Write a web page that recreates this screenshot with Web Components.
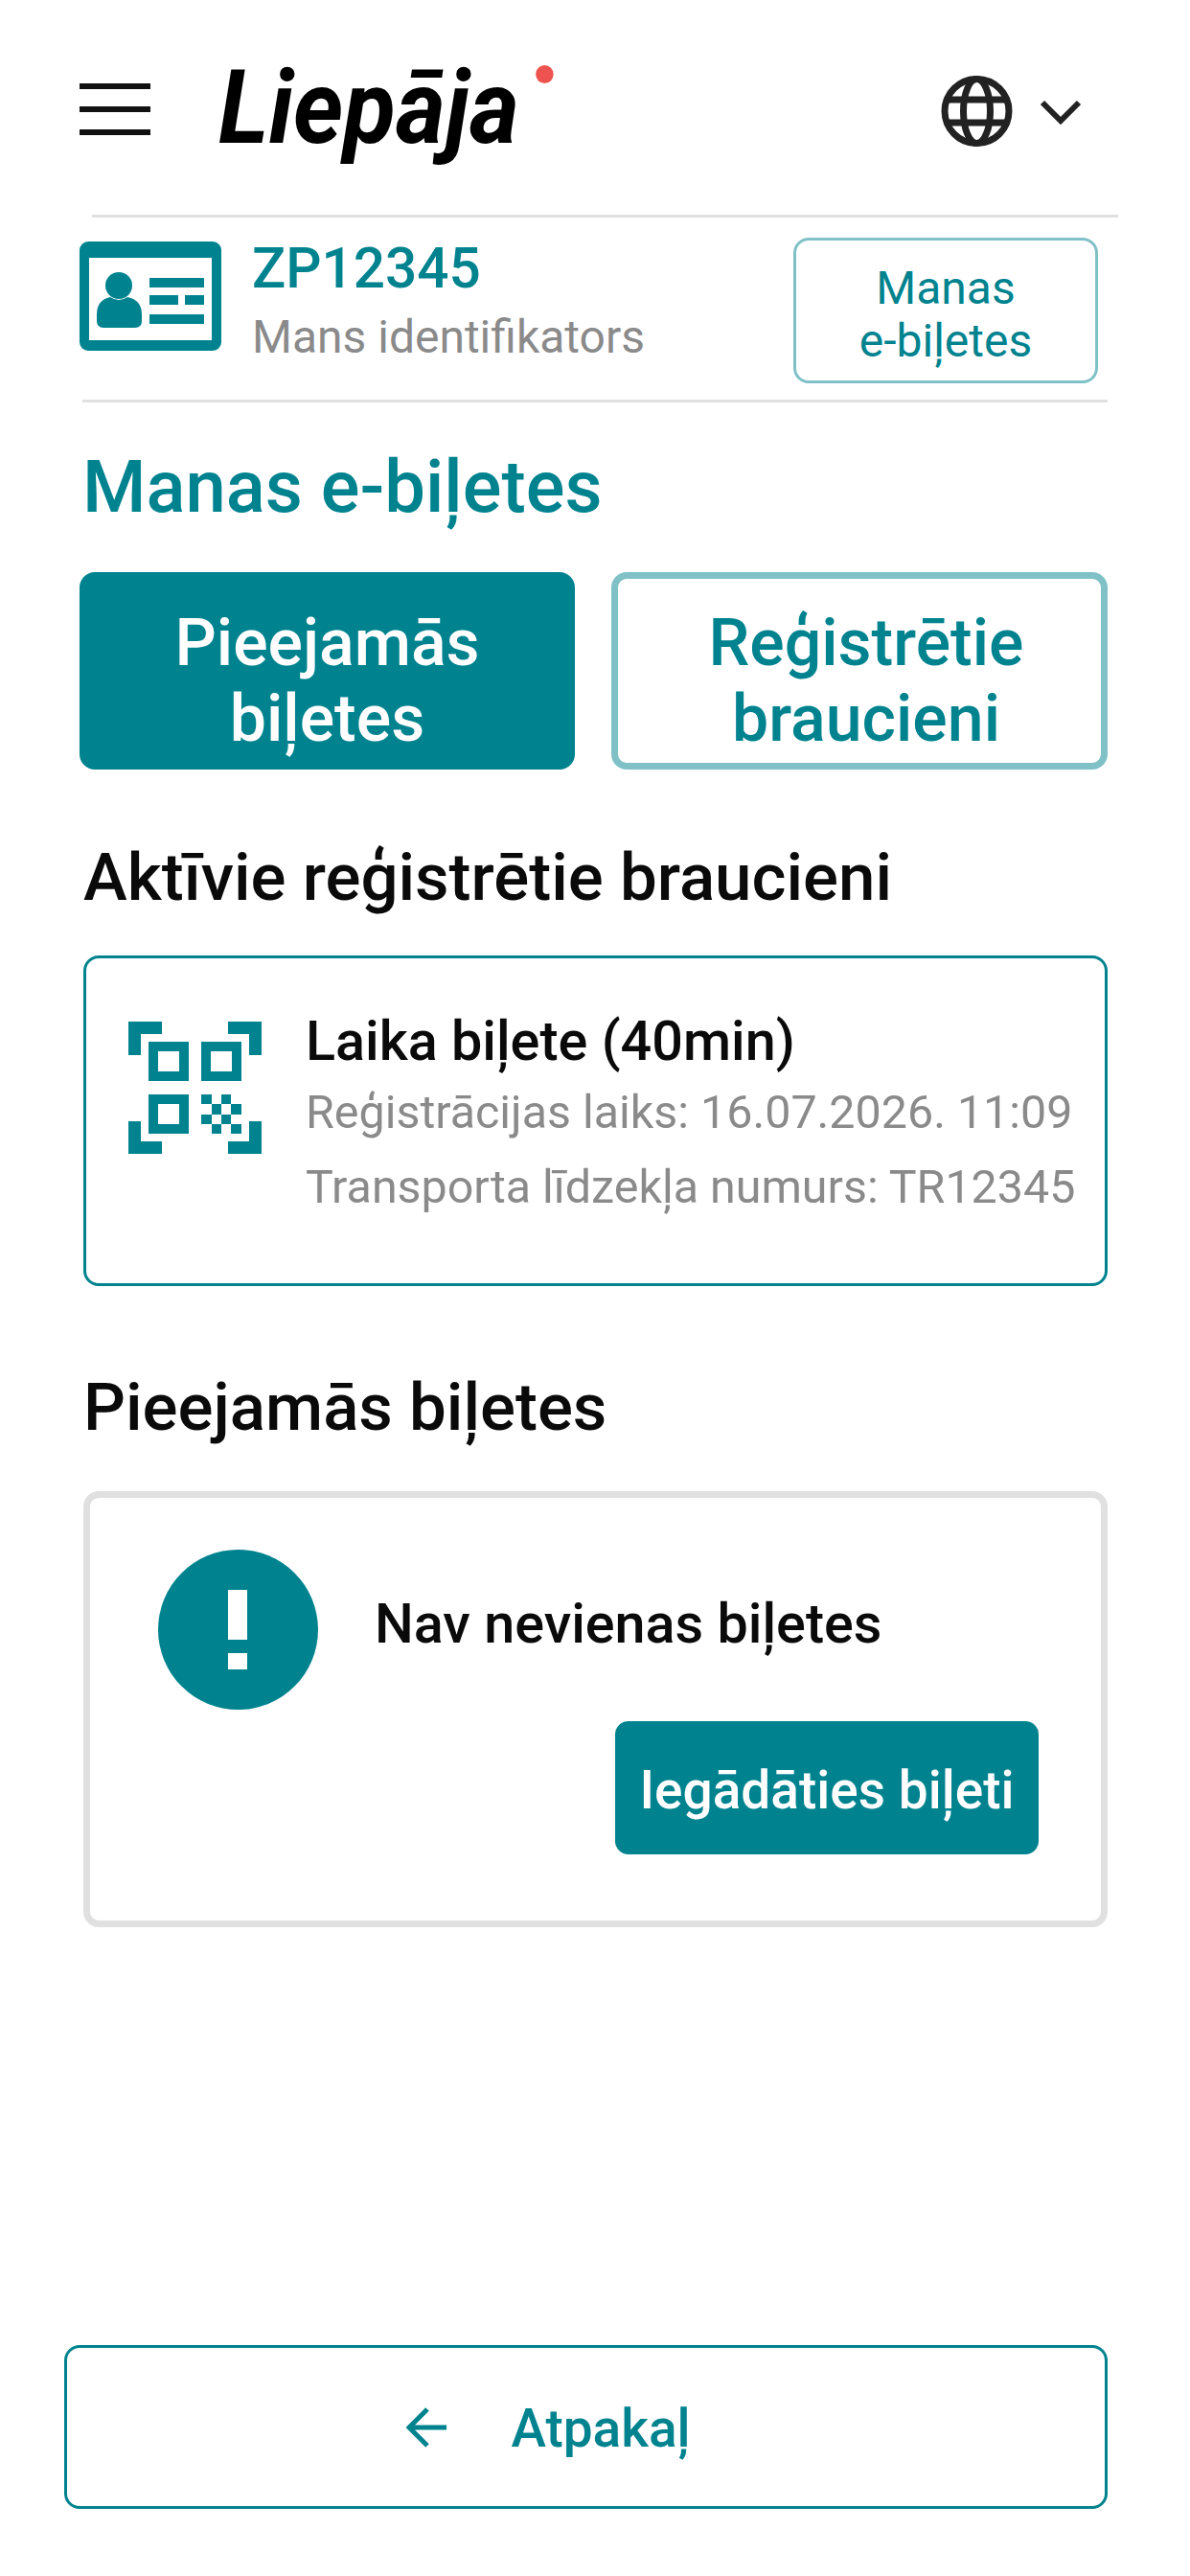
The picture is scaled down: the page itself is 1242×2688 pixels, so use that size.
<!DOCTYPE html>
<html lang="lv">
<head>
<meta charset="utf-8">
<title>Manas e-biļetes</title>
<style>
    html, body { margin: 0; background: #fff; }
    body { font-family: Roboto, "Noto Sans", sans-serif; }
    .page { display: flex; flex-direction: column; height: 2688px; box-sizing: border-box; padding-bottom: 70px; }
    .spacer { flex: 1; }
</style>
</head>
<body>
<div class="page">
    <lv-header></lv-header>
    <lv-id-bar code="ZP12345" label="Mans identifikators">Manas<br>e-biļetes</lv-id-bar>
    <lv-page-title>Manas e-biļetes</lv-page-title>
    <lv-tabs>
        <lv-tab active>Pieejamās<br>biļetes</lv-tab>
        <lv-tab>Reģistrētie<br>braucieni</lv-tab>
    </lv-tabs>
    <lv-section-title style="--top:73px">Aktīvie reģistrētie braucieni</lv-section-title>
    <lv-ride-card name="Laika biļete (40min)" time="Reģistrācijas laiks: 16.07.2026. 11:09" vehicle="Transporta līdzekļa numurs: TR12345"></lv-ride-card>
    <lv-section-title style="--top:87px">Pieejamās biļetes</lv-section-title>
    <lv-empty-card text="Nav nevienas biļetes" action="Iegādāties biļeti"></lv-empty-card>
    <div class="spacer"></div>
    <lv-back-button>Atpakaļ</lv-back-button>
</div>
<script>
const TEAL = "#00838f";

class LvHeader extends HTMLElement {
    constructor() {
        super();
        this.attachShadow({ mode: "open" });
    }
    connectedCallback() {
        this.shadowRoot.innerHTML = `
            <style>
                :host { display: flex; align-items: flex-start; height: 224px; box-sizing: border-box; padding: 69px 113px 0 83px; }
                .burger { display: flex; flex-direction: column; gap: 18px; width: 74px; margin-top: 18px; }
                .burger i { display: block; height: 6px; background: #111; }
                .logo { position: relative; margin: -7px 0 0 71px; font: italic 700 108px/100px Roboto, sans-serif; color: #000; transform: scaleX(.925); transform-origin: left top; white-space: nowrap; }
                .logo b { position: absolute; left: 358px; top: 6px; width: 20px; height: 19px; border-radius: 50%; background: #ef5350; }
                .lang { margin: 10px 0 0 auto; display: flex; align-items: center; gap: 28px; }
                .lang svg { display: block; }
            </style>
            <div class="burger"><i></i><i></i><i></i></div>
            <div class="logo">Liepāja<b></b></div>
            <div class="lang">
                <svg width="75" height="74" viewBox="0 0 75 74" fill="none" stroke="#222" stroke-width="7">
                    <circle cx="37.5" cy="37" r="33.5"/>
                    <ellipse cx="37.5" cy="37" rx="14" ry="33.5"/>
                    <path d="M4 25H71M4 49H71"/>
                </svg>
                <svg width="44" height="27" viewBox="0 0 44 27" fill="none" stroke="#222" stroke-width="6">
                    <path d="M3 4L22 23L41 4"/>
                </svg>
            </div>
        `;
    }
}

class LvIdBar extends HTMLElement {
    constructor() {
        super();
        this.attachShadow({ mode: "open" });
    }
    connectedCallback() {
        this.shadowRoot.innerHTML = `
            <style>
                :host { display: block; padding-right: 86px; }
                .line { height: 3px; background: #e0e0e0; }
                .top { margin: 0 -11px 0 96px; }
                .bottom { margin-left: 86px; }
                .row { display: flex; align-items: flex-start; height: 190px; padding: 0 10px 0 83px; }
                .icon { display: block; flex: none; margin-top: 25px; }
                .text { margin: 20px 0 0 32px; display: flex; flex-direction: column; }
                .code { font: 500 58.5px/66px Roboto, sans-serif; color: ${TEAL}; }
                .label { margin-top: 9px; font: 400 48px/60px Roboto, sans-serif; color: #8a8a8a; }
                button { margin: 21px 0 0 auto; width: 318px; height: 152px; padding: 8px 0 0; background: #fff; border: 3px solid #7fc1c7; border-radius: 16px; font: 400 48px/55px Roboto, sans-serif; color: ${TEAL}; }
            </style>
            <div class="line top"></div>
            <div class="row">
                <svg class="icon" width="148" height="114" viewBox="0 0 148 114">
                    <rect width="148" height="114" rx="9" fill="${TEAL}"/>
                    <rect x="10" y="17" width="128" height="86" fill="#fff"/>
                    <circle cx="41" cy="46" r="14" fill="${TEAL}"/>
                    <path d="M18 76Q18 61 32 58Q41 64 50 58Q65 61 65 76V83Q65 90 58 90H25Q18 90 18 83Z" fill="${TEAL}"/>
                    <path d="M73 38H130V48H73ZM73 56H103V66H73ZM110 56H130V66H110ZM73 76H130V86H73Z" fill="${TEAL}"/>
                </svg>
                <div class="text">
                    <span class="code">${this.getAttribute("code")}</span>
                    <span class="label">${this.getAttribute("label")}</span>
                </div>
                <button><slot></slot></button>
            </div>
            <div class="line bottom"></div>
        `;
    }
}

class LvPageTitle extends HTMLElement {
    constructor() {
        super();
        this.attachShadow({ mode: "open" });
    }
    connectedCallback() {
        this.shadowRoot.innerHTML = `
            <style>
                :host { display: block; margin: 44px 0 0 86px; font: 500 76px/88px Roboto, sans-serif; color: ${TEAL}; }
            </style>
            <slot></slot>
        `;
    }
}

class LvTabs extends HTMLElement {
    constructor() {
        super();
        this.attachShadow({ mode: "open" });
    }
    connectedCallback() {
        this.shadowRoot.innerHTML = `
            <style>
                :host { display: grid; grid-template-columns: 517px 518px; gap: 38px; margin: 45px 0 0 83px; }
            </style>
            <slot></slot>
        `;
    }
}

class LvTab extends HTMLElement {
    constructor() {
        super();
        this.attachShadow({ mode: "open" });
    }
    connectedCallback() {
        this.shadowRoot.innerHTML = `
            <style>
                :host { display: flex; align-items: center; justify-content: center; height: 206px; box-sizing: border-box; padding: 21px 0 0 14px; border: 7px solid #80c1c7; border-radius: 16px; font: 500 68px/79px Roboto, sans-serif; text-align: center; color: ${TEAL}; background: #fff; }
                :host([active]) { padding-left: 0; border-color: ${TEAL}; background: ${TEAL}; color: #fff; }
            </style>
            <div><slot></slot></div>
        `;
    }
}

class LvSectionTitle extends HTMLElement {
    constructor() {
        super();
        this.attachShadow({ mode: "open" });
    }
    connectedCallback() {
        this.shadowRoot.innerHTML = `
            <style>
                :host { display: block; margin: var(--top, 0) 0 0 87px; font: 500 69px/80px Roboto, sans-serif; color: #0a0a0a; }
            </style>
            <slot></slot>
        `;
    }
}

class LvRideCard extends HTMLElement {
    constructor() {
        super();
        this.attachShadow({ mode: "open" });
    }
    connectedCallback() {
        this.shadowRoot.innerHTML = `
            <style>
                :host { display: flex; align-items: flex-start; height: 345px; box-sizing: border-box; margin: 41px 86px 0 87px; padding: 66px 0 0 44px; border: 3px solid ${TEAL}; border-radius: 16px; }
                svg { display: block; flex: none; }
                .text { margin: -10px 0 0 46px; display: flex; flex-direction: column; white-space: nowrap; }
                .name { margin-bottom: 4px; font: 500 57.5px/62px Roboto, sans-serif; color: #0a0a0a; }
                .meta { font: 400 48.4px/78px Roboto, sans-serif; color: #8a8a8a; }
            </style>
            <svg width="139" height="138" viewBox="0 0 139 138" fill="${TEAL}">
                <path d="M0 0H35V13H13V35H0ZM104 0H139V35H126V13H104ZM0 104H13V125H35V138H0ZM126 104H139V138H104V125H126Z"/>
                <path fill-rule="evenodd" d="M21 21H63V62H21ZM31 31V52H53V31ZM76 21H118V62H76ZM86 31V52H108V31ZM21 76H63V117H21ZM31 86V107H53V86Z"/>
                <path d="M76 76H87V86H76ZM97 76H107V86H97ZM87 86H97V97H87ZM107 86H118V97H107ZM76 97H87V107H76ZM97 97H107V107H97ZM87 107H97V117H87ZM107 107H118V117H107Z"/>
            </svg>
            <div class="text">
                <span class="name">${this.getAttribute("name")}</span>
                <span class="meta">${this.getAttribute("time")}</span>
                <span class="meta">${this.getAttribute("vehicle")}</span>
            </div>
        `;
    }
}

class LvEmptyCard extends HTMLElement {
    constructor() {
        super();
        this.attachShadow({ mode: "open" });
    }
    connectedCallback() {
        this.shadowRoot.innerHTML = `
            <style>
                :host { display: block; height: 455px; box-sizing: border-box; margin: 47px 86px 0 87px; padding: 54px 65px 0 71px; border: 7px solid #e0e0e0; border-radius: 16px; }
                .row { display: flex; align-items: center; }
                svg { display: block; flex: none; }
                .text { margin: 0 0 12px 59px; font: 500 57.5px/66px Roboto, sans-serif; color: #0a0a0a; }
                button { display: block; margin: 12px 0 0 auto; width: 442px; height: 139px; padding: 4px 0 0; border: 0; border-radius: 14px; background: ${TEAL}; color: #fff; font: 500 55px/60px Roboto, sans-serif; }
            </style>
            <div class="row">
                <svg width="167" height="167" viewBox="0 0 167 167">
                    <circle cx="83.5" cy="83.5" r="83.5" fill="${TEAL}"/>
                    <rect x="73" y="42" width="20" height="52" fill="#fff"/>
                    <rect x="73" y="108" width="20" height="17" fill="#fff"/>
                </svg>
                <span class="text">${this.getAttribute("text")}</span>
            </div>
            <button>${this.getAttribute("action")}</button>
        `;
    }
}

class LvBackButton extends HTMLElement {
    constructor() {
        super();
        this.attachShadow({ mode: "open" });
    }
    connectedCallback() {
        this.shadowRoot.innerHTML = `
            <style>
                :host { display: flex; align-items: center; justify-content: center; gap: 67px; height: 171px; box-sizing: border-box; margin: 0 86px 0 67px; padding-right: 78px; border: 3px solid ${TEAL}; border-radius: 16px; font: 500 55px/66px Roboto, sans-serif; color: ${TEAL}; }
                svg { display: block; }
                span { padding-top: 3px; }
            </style>
            <svg width="42" height="42" viewBox="0 0 42 42" fill="none" stroke="${TEAL}" stroke-width="5">
                <path d="M42 21H4M22 2L3 21L22 40"/>
            </svg>
            <span><slot></slot></span>
        `;
    }
}

customElements.define("lv-header", LvHeader);
customElements.define("lv-id-bar", LvIdBar);
customElements.define("lv-page-title", LvPageTitle);
customElements.define("lv-tabs", LvTabs);
customElements.define("lv-tab", LvTab);
customElements.define("lv-section-title", LvSectionTitle);
customElements.define("lv-ride-card", LvRideCard);
customElements.define("lv-empty-card", LvEmptyCard);
customElements.define("lv-back-button", LvBackButton);
</script>
</body>
</html>
